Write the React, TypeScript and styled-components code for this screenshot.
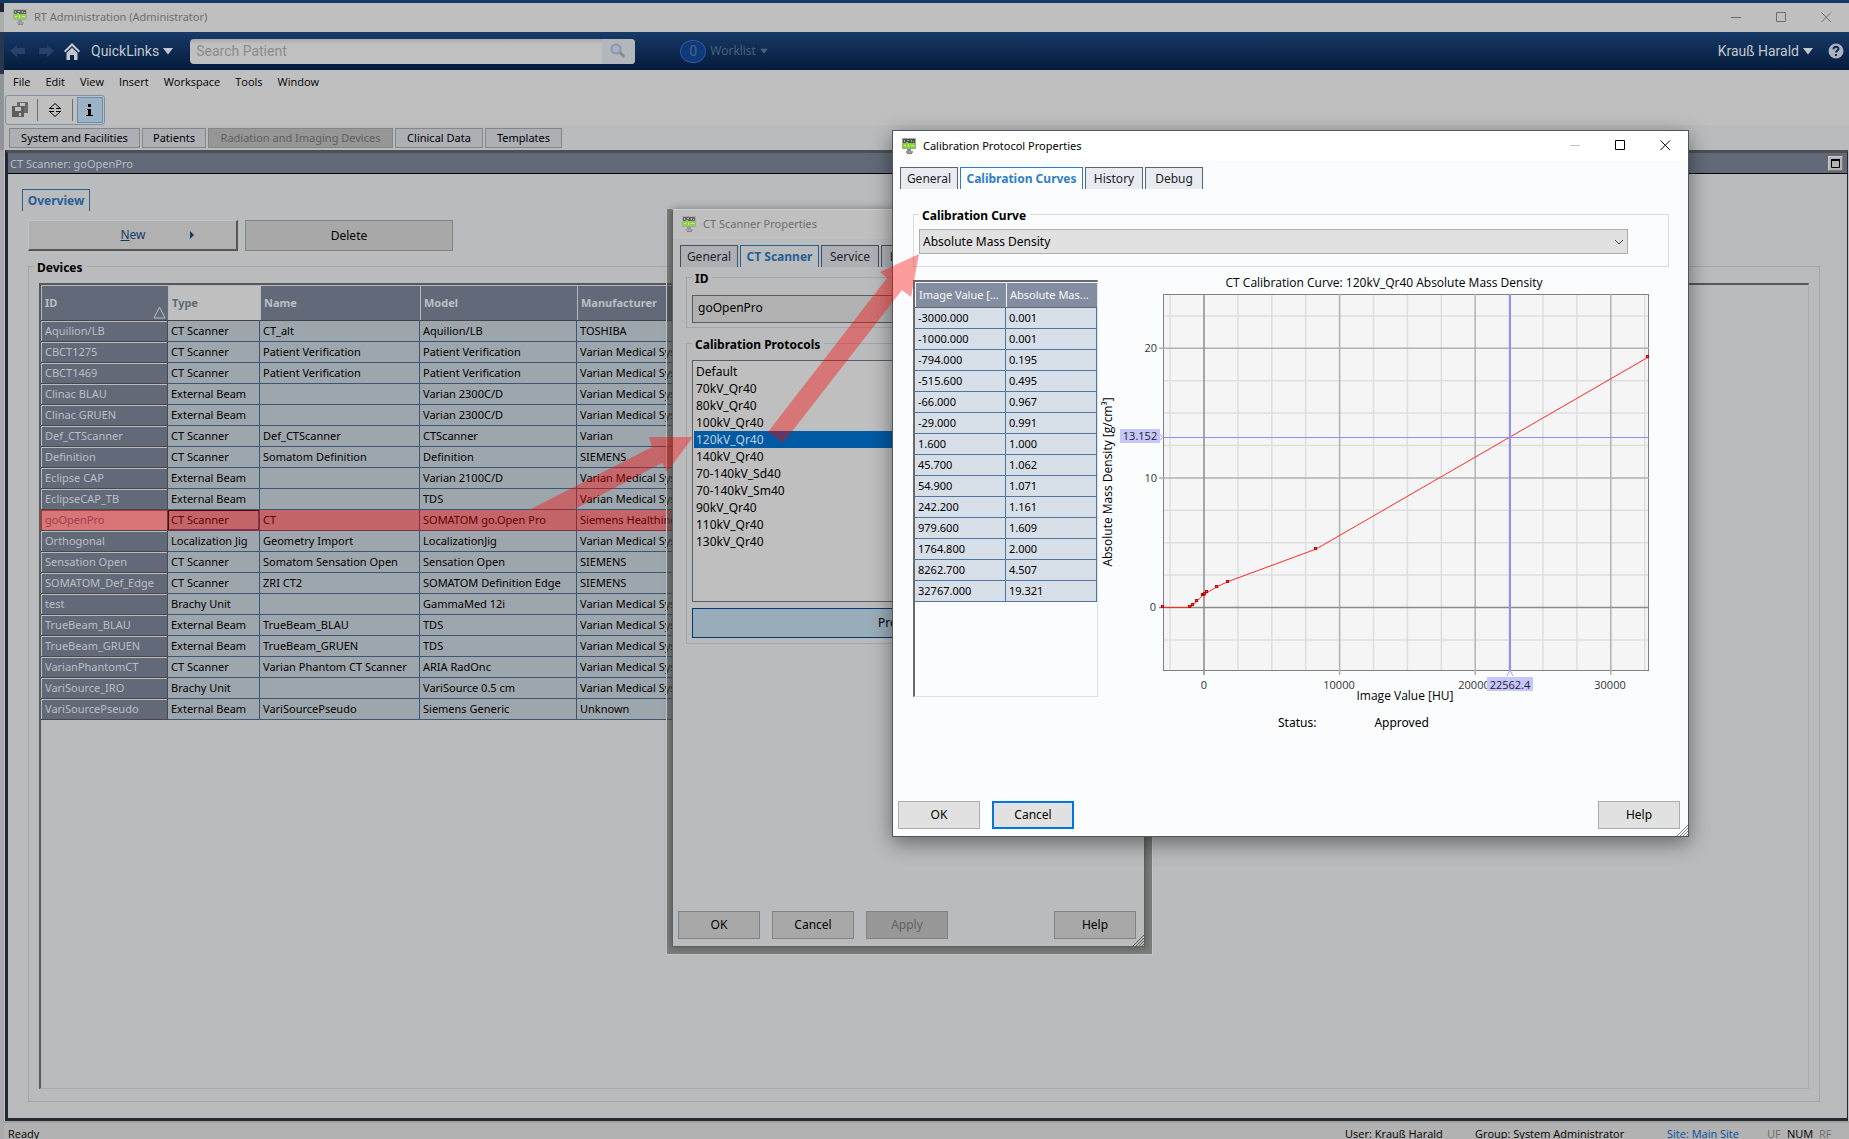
import React from "react";
import styled, { createGlobalStyle, css } from "styled-components";

const Global = createGlobalStyle`
  * { box-sizing: border-box; }
  html, body, #root { height: 100%; }
  body {
    margin: 0;
    overflow: hidden;
    background: #b4b5b7;
    color: #000;
    font: 11px/16px "Noto Sans", "Open Sans", sans-serif;
  }
  button, input, select, table { font: inherit; color: inherit; }
  button { padding: 0; white-space: nowrap; }
`;

/* ---------- desktop and main window ---------- */

const Desktop = styled.div`
  position: relative;
  height: 100%;
  padding: 3px 0 0 4px;
  overflow: hidden;
  background: linear-gradient(#163864 0 3px, #20242c 3px 12px, #a9abad 12px 32px, #27374d 32px 74px, #8f9498 74px 150px, #a9aaab 150px);
`;

const MainWindow = styled.div`
  display: flex;
  flex-direction: column;
  height: 100%;
  background: #bfbfbf;
`;

const TitleBar = styled.header<{ $dim?: boolean; $height: number }>`
  display: flex;
  flex: none;
  align-items: center;
  gap: 7px;
  height: ${(p) => p.$height}px;
  padding: 0 0 1px 9px;
  background: ${(p) => (p.$dim ? "#bfbfbf" : "#fff")};
  color: ${(p) => (p.$dim ? "#6e6e6e" : "#000")};
`;

const TitleText = styled.span`
  flex: 1;
  white-space: nowrap;
`;

const WinButtonRow = styled.div`
  display: flex;
`;

const WinButton = styled.button<{ $color: string }>`
  display: grid;
  place-items: center;
  width: 45px;
  height: 26px;
  border: 0;
  background: none;
  color: ${(p) => p.$color};
`;

const NavBar = styled.nav`
  display: flex;
  flex: none;
  align-items: center;
  height: 38px;
  padding: 0 5px 0 6px;
  background: linear-gradient(#173a68, #0c274c 60%, #041c3c);
  color: #c3c8ce;
  font-family: Roboto, "Liberation Sans", sans-serif;
  font-size: 14px;
`;

const NavButton = styled.button<{ $dim?: boolean; $gap?: number }>`
  display: flex;
  align-items: center;
  gap: 4px;
  margin-left: ${(p) => p.$gap ?? 0}px;
  border: 0;
  background: none;
  color: ${(p) => (p.$dim ? "#4b6485" : "#c3c8ce")};
`;

const SearchBox = styled.label`
  display: flex;
  width: 445px;
  height: 25px;
  margin-left: 17px;
  overflow: hidden;
  border-radius: 4px;
  background: linear-gradient(#a9a9a9, #c0c0c0 5px);
`;

const SearchInput = styled.input`
  flex: 1;
  min-width: 0;
  padding: 0 6px;
  border: 0;
  outline: 0;
  background: none;
  font-size: 14px;
  font-family: Roboto, "Liberation Sans", sans-serif;
  &::placeholder { color: #8c8c8c; }
`;

const SearchIconCell = styled.span`
  display: grid;
  place-items: center;
  width: 33px;
  background: #b3b6ba;
`;

const Badge = styled.span`
  display: grid;
  place-items: center;
  width: 26px;
  height: 23px;
  border: 1px solid #2e5a98;
  border-radius: 50%;
  background: #0e3a7c;
`;

const WorklistText = styled.span`
  font: 12px/16px "Open Sans", sans-serif;
`;

const Spacer = styled.span`
  flex: 1;
`;

const MenuBar = styled.div`
  display: flex;
  flex: none;
  gap: 15px;
  height: 25px;
  padding: 0 9px 2px;
  align-items: center;
  font-family: "Open Sans", "Noto Sans", sans-serif;
`;

const MenuItem = styled.button`
  border: 0;
  background: none;
`;

const Toolbar = styled.div`
  display: flex;
  flex: none;
  align-items: center;
  align-self: flex-start;
  height: 30px;
  margin-left: 1px;
  padding: 0 1px;
  border: 1px solid #858fa2;
  border-radius: 3px;
`;

const ToolButton = styled.button<{ $active?: boolean }>`
  display: grid;
  place-items: center;
  width: 26px;
  height: 26px;
  border: 1px solid ${(p) => (p.$active ? "#6690b8" : "transparent")};
  background: ${(p) => (p.$active ? "#9cb2c5" : "none")};
`;

const ToolRule = styled.span`
  width: 1px;
  height: 22px;
  margin: 0 4px;
  background: #6d6d6d;
`;

const WorkspaceTabs = styled.div`
  display: flex;
  flex: none;
  gap: 2px;
  height: 25px;
  padding: 3px 0 2px 5px;
  background: #babbbd;
`;

const WorkspaceTab = styled.button<{ $width: number }>`
  width: ${(p) => p.$width}px;
  border: 1px solid #868686;
  background: #acafb4;
  &:disabled { background: #969696; color: #5f5f5f; }
`;

const Panel = styled.main`
  display: flex;
  flex: 1;
  flex-direction: column;
  min-height: 0;
  margin: 0 1px 0 1px;
  border: 3px solid #242a33;
  border-top-color: #4c5053;
  border-right-width: 1px;
  background: #babbbd;
`;

const Caption = styled.div`
  display: flex;
  flex: none;
  align-items: center;
  justify-content: space-between;
  height: 21px;
  padding: 1px 4px 0 2px;
  border-bottom: 1px solid #000;
  background: #626a79;
  color: #babdc2;
`;

const RestoreButton = styled.button`
  display: grid;
  place-items: center;
  width: 15px;
  height: 15px;
  border: 1px outset #ccc;
  background: #b3b3b3;
`;

const PanelBody = styled.div`
  display: flex;
  flex: 1;
  flex-direction: column;
  min-height: 0;
  padding: 15px 27px 16px 14px;
`;

const TabStrip = styled.div`
  display: flex;
  flex: none;
  gap: 2px;
  height: 22px;
`;

const Tab = styled.button<{ $width: number; $dim?: boolean; $active?: boolean }>`
  flex: none;
  width: ${(p) => p.$width}px;
  border: 1px solid ${(p) => (p.$dim ? "#474e5a" : "#5a6478")};
  border-bottom: 0;
  background: ${(p) => (p.$dim ? "#adb0b5" : "#e8ebf0")};
  color: #1f2328;
  font-size: 12px;
  ${(p) =>
    p.$active &&
    css`
      border-color: ${p.$dim ? "#265f96" : "#2f7fc6"};
      background: ${p.$dim ? "#babbbd" : "#fafcfe"};
      color: ${p.$dim ? "#265f96" : "#337fc6"};
      font-weight: 700;
    `}
`;

const ActionRow = styled.div`
  display: flex;
  flex: none;
  gap: 7px;
  padding: 9px 6px 7px;
`;

const ActionButton = styled.button<{ $raised?: boolean }>`
  display: flex;
  align-items: center;
  justify-content: center;
  gap: 44px;
  width: ${(p) => (p.$raised ? 210 : 208)}px;
  height: 31px;
  border: 1px solid #838383;
  background: #a8a8a8;
  font-size: 12px;
  ${(p) =>
    p.$raised &&
    css`
      border-color: #c4c4c4 #555 #555 #c4c4c4;
      border-width: 1px 2px 2px 1px;
      background: #b1b1b1;
      color: #143a66;
      padding-left: 50px;
    `}
`;

const Group = styled.fieldset<{ $dim?: boolean; $pad: string; $margin?: string; $grow?: boolean; $height?: number }>`
  min-width: 0;
  min-height: 0;
  ${(p) => p.$grow && "flex: 1;"}
  ${(p) => p.$height && `height: ${p.$height}px; flex: none;`}
  margin: ${(p) => p.$margin ?? "0"};
  padding: ${(p) => p.$pad};
  border: 1px solid ${(p) => (p.$dim ? "#a4a5a7" : "#dcdcdc")};
`;

const GroupTitle = styled.legend<{ $indent?: number }>`
  margin-left: ${(p) => p.$indent ?? 0}px;
  padding: 3px 4px 0 3px;
  font-size: 12px;
  font-weight: 700;
  line-height: 13px;
`;

const DeviceFrame = styled.div`
  height: 100%;
  border: 2px solid #585858;
  border-right: 1px solid #aaabad;
  border-bottom: 1px solid #aaabad;
`;

/* ---------- tables ---------- */

const DeviceTable = styled.table`
  width: 740px;
  table-layout: fixed;
  border-spacing: 0;
`;

const DeviceHead = styled.th<{ $light?: boolean }>`
  position: relative;
  height: 36px;
  padding: 0 4px;
  border: 1px solid #444;
  border-width: 0 0 1px 0;
  box-shadow: inset 1px 1px 0 #b4b8bf;
  background: ${(p) => (p.$light ? "#bfbfbf" : "#626a79")};
  color: ${(p) => (p.$light ? "#626a79" : "#bcbfc4")};
  text-align: left;
`;

const SortMark = styled.svg`
  position: absolute;
  right: 2px;
  bottom: 1px;
`;

const DeviceRow = styled.tr<{ $marked?: boolean }>`
  th, td {
    height: 21px;
    padding: 0 3px;
    overflow: hidden;
    white-space: nowrap;
    text-align: left;
    font-weight: 400;
    line-height: 16px;
    border-bottom: 1px solid ${(p) => (p.$marked ? "#81304a" : "#3d5671")};
    border-right: 1px solid ${(p) => (p.$marked ? "#81304a" : "#3d5671")};
    background: ${(p) => (p.$marked ? "#c4656a" : "#9ea6ad")};
    color: ${(p) => (p.$marked ? "#600004" : "#000")};
  }
  th {
    border-color: #484848;
    padding-left: 4px;
    background: ${(p) => (p.$marked ? "#d87577" : "#626a79")};
    color: ${(p) => (p.$marked ? "#a04050" : "#bcbfc4")};
    box-shadow: inset 1px 1px 0 ${(p) => (p.$marked ? "#a83a3c" : "#b9bbbf")};
  }
  ${(p) => p.$marked && "td:nth-child(2) { box-shadow: inset 1px 1px 0 #600004, inset -1px -1px 0 #81304a; }"}
`;

const ValueTable = styled.table`
  width: 100%;
  table-layout: fixed;
  border-spacing: 0;
  th {
    height: 26px;
    padding: 0 4px;
    border-bottom: 1px solid #696969;
    box-shadow: inset 1px 1px 0 #f4f5f7;
    background: #838da1;
    color: #fafbfc;
    font-weight: 400;
    text-align: left;
    white-space: nowrap;
  }
  td {
    height: 21px;
    padding: 0 3px;
    border-bottom: 1px solid #5274a0;
    border-right: 1px solid #5274a0;
    background: #d6dee8;
    line-height: 16px;
  }
`;

const ValueFrame = styled.div`
  flex: none;
  width: 185px;
  height: 417px;
  margin-top: 8px;
  border: 2px solid #696969;
  border-right: 1px solid #e0e0e0;
  border-bottom: 1px solid #e0e0e0;
`;

/* ---------- status bar ---------- */

const StatusBar = styled.footer`
  display: flex;
  flex: none;
  height: 18px;
  padding-left: 4px;
  border-top: 2px solid #a3a3a3;
  background: #b2b2b2;
  font-family: "Open Sans", "Noto Sans", sans-serif;
  line-height: 22px;
  white-space: nowrap;
  overflow: hidden;
`;

const StatusCell = styled.span<{ $width?: number; $accent?: boolean; $dim?: boolean }>`
  flex: ${(p) => (p.$width ? `0 0 ${p.$width}px` : "1")};
  ${(p) => p.$accent && "color: #0050a0;"}
  ${(p) => p.$dim && "color: #6c6c6c;"}
`;

/* ---------- dialogs ---------- */

const ScannerHalo = styled.div`
  position: absolute;
  left: 666px;
  top: 209px;
  width: 487px;
  padding: 0 7px 7px 5px;
  border: 1px solid #c6c7c8;
  border-top: 0;
  background: rgba(70, 76, 70, 0.55);
`;

const ScannerDialog = styled.section`
  display: flex;
  flex-direction: column;
  height: 738px;
  border: 1px solid #5f6061;
  border-top-color: #cdcdcd;
  background: #babbbd;
  box-shadow: 0 0 8px rgba(0, 0, 0, 0.35);
`;

const CurveDialog = styled.section`
  position: absolute;
  left: 892px;
  top: 130px;
  display: flex;
  flex-direction: column;
  width: 797px;
  height: 707px;
  border: 1px solid #535557;
  background: #fafcfe;
  box-shadow: 0 6px 20px rgba(0, 0, 0, 0.45);
`;

const DialogTabs = styled.div`
  flex: none;
  padding: 6px 7px 0;
`;

const IdInput = styled.input`
  display: block;
  width: 100%;
  height: 28px;
  padding: 0 5px 3px;
  border: 1px solid #5c5c5c;
  background: #b1b1b1;
  font-size: 12px;
`;

const ProtocolList = styled.ul`
  height: 242px;
  margin: 0 0 6px;
  padding: 2px 1px;
  border: 1px solid #5b5e62;
  background: #bfbfbf;
  list-style: none;
`;

const ProtocolItem = styled.li<{ $selected?: boolean }>`
  height: 17px;
  padding-left: 2px;
  font-size: 12px;
  line-height: 17px;
  ${(p) => p.$selected && "background: #005aa3; color: #bfcfdf;"}
`;

const PropertiesButton = styled.button`
  display: block;
  width: 100%;
  height: 30px;
  border: 1px solid #003a6e;
  background: #99acb9;
  font-size: 12px;
`;

const Footer = styled.div`
  display: flex;
  gap: 12px;
  margin-top: auto;
  padding: 0 8px 7px 5px;
`;

const DialogButton = styled.button<{ $dim?: boolean; $focus?: boolean }>`
  width: 82px;
  height: 28px;
  border: ${(p) => (p.$focus ? "2px solid #0078d7" : `1px solid ${p.$dim ? "#828282" : "#adadad"}`)};
  background: ${(p) => (p.$dim ? "#a8a8a8" : "#e1e1e1")};
  font-size: 12px;
  &:disabled { background: #989898; color: #626262; }
`;

const Grip = styled.svg`
  position: absolute;
  right: 0;
  bottom: 0;
`;

const GripHost = styled.div`
  position: relative;
`;

const SelectWrap = styled.label`
  position: relative;
  display: block;
  margin-right: 35px;
  svg { position: absolute; right: 4px; top: 9px; }
`;

const CurveSelect = styled.select`
  appearance: none;
  display: block;
  width: 100%;
  height: 25px;
  padding: 1px 3px 0;
  border: 1px solid #adadad;
  border-radius: 0;
  background: #e1e1e1;
  font-size: 12px;
`;

const CurveRow = styled.div`
  display: flex;
  margin: 5px 0 0 20px;
`;

const StatusLine = styled.div`
  display: flex;
  gap: 58px;
  padding: 12px 0 0 385px;
  font-size: 12px;
`;

const ArrowLayer = styled.svg`
  position: absolute;
  left: 0;
  top: 0;
  pointer-events: none;
`;

/* ---------- drawings ---------- */

const AppIcon = ({ dim }: { dim?: boolean }) => (
  <svg width="14" height="16" viewBox="0 0 14 16" opacity={dim ? 0.8 : 1}>
    <path d="M0 0h14v11H0z" fill="#a3a5a5" />
    <path d="M1 1h12v9H1z" fill="#4a504e" />
    <path d="M1 5h12v5H1z" fill="#86d62a" />
    <path d="M2 2h1v2H2zM5 2h2v1H5zM9 2h1v2H9zM11 3h1v1h-1zM4 4h2v1H4z" fill="#a5acaa" />
    <path d="M2 7h2v1H2zM6 6h1v3H6zM9 7h3v1H9z" fill="#d0f59a" />
    <path d="M5 11h4v2H5z" fill="#8c8c8c" />
    <path d="M4 13h7v2H4z" fill="#9b9b9b" />
    <path d="M5 15h5v1H5z" fill="#7a7a7a" />
  </svg>
);

const MinGlyph = () => (
  <svg width="11" height="11"><path d="M0 5.5h10" stroke="currentColor" /></svg>
);
const MaxGlyph = () => (
  <svg width="11" height="11"><path d="M.5.5h9v9h-9z" fill="none" stroke="currentColor" /></svg>
);
const CloseGlyph = () => (
  <svg width="11" height="11"><path d="M.5.5l9.500 9.500M10 .5L.5 10" fill="none" stroke="currentColor" /></svg>
);
const Caret = ({ size = 10 }: { size?: number }) => (
  <svg width={size} height={size - 2} viewBox="0 0 10 8"><path d="M0 1h10L5 7.500z" fill="currentColor" /></svg>
);
const GripLines = ({ color }: { color: string }) => (
  <Grip width="12" height="12"><path d="M1 12L12 1M4 12l8-8M7 12l5-5M10 12l2-2" stroke={color} /></Grip>
);

const WindowButtons = ({ dim }: { dim?: boolean }) => (
  <WinButtonRow>
    <WinButton aria-label="Minimize" $color={dim ? "#6e6e6e" : "#c4c4c4"}><MinGlyph /></WinButton>
    <WinButton aria-label="Maximize" $color={dim ? "#6e6e6e" : "#000"}><MaxGlyph /></WinButton>
    <WinButton aria-label="Close" $color={dim ? "#6e6e6e" : "#000"}><CloseGlyph /></WinButton>
  </WinButtonRow>
);

/* ---------- data ---------- */

const menus = ["File", "Edit", "View", "Insert", "Workspace", "Tools", "Window"];

const workspaces: [string, number][] = [
  ["System and Facilities", 131],
  ["Patients", 64],
  ["Radiation and Imaging Devices", 185],
  ["Clinical Data", 88],
  ["Templates", 77],
];

const devices = [
  ["Aquilion/LB", "CT Scanner", "CT_alt", "Aquilion/LB", "TOSHIBA"],
  ["CBCT1275", "CT Scanner", "Patient Verification", "Patient Verification", "Varian Medical Systems"],
  ["CBCT1469", "CT Scanner", "Patient Verification", "Patient Verification", "Varian Medical Systems"],
  ["Clinac BLAU", "External Beam", "", "Varian 2300C/D", "Varian Medical Systems"],
  ["Clinac GRUEN", "External Beam", "", "Varian 2300C/D", "Varian Medical Systems"],
  ["Def_CTScanner", "CT Scanner", "Def_CTScanner", "CTScanner", "Varian"],
  ["Definition", "CT Scanner", "Somatom Definition", "Definition", "SIEMENS"],
  ["Eclipse CAP", "External Beam", "", "Varian 2100C/D", "Varian Medical Systems"],
  ["EclipseCAP_TB", "External Beam", "", "TDS", "Varian Medical Systems"],
  ["goOpenPro", "CT Scanner", "CT", "SOMATOM go.Open Pro", "Siemens Healthineers"],
  ["Orthogonal", "Localization Jig", "Geometry Import", "LocalizationJig", "Varian Medical Systems"],
  ["Sensation Open", "CT Scanner", "Somatom Sensation Open", "Sensation Open", "SIEMENS"],
  ["SOMATOM_Def_Edge", "CT Scanner", "ZRI CT2", "SOMATOM Definition Edge", "SIEMENS"],
  ["test", "Brachy Unit", "", "GammaMed 12i", "Varian Medical Systems"],
  ["TrueBeam_BLAU", "External Beam", "TrueBeam_BLAU", "TDS", "Varian Medical Systems"],
  ["TrueBeam_GRUEN", "External Beam", "TrueBeam_GRUEN", "TDS", "Varian Medical Systems"],
  ["VarianPhantomCT", "CT Scanner", "Varian Phantom CT Scanner", "ARIA RadOnc", "Varian Medical Systems"],
  ["VariSource_IRO", "Brachy Unit", "", "VariSource 0.5 cm", "Varian Medical Systems"],
  ["VariSourcePseudo", "External Beam", "VariSourcePseudo", "Siemens Generic", "Unknown"],
];

const protocols = [
  "Default", "70kV_Qr40", "80kV_Qr40", "100kV_Qr40", "120kV_Qr40", "140kV_Qr40",
  "70-140kV_Sd40", "70-140kV_Sm40", "90kV_Qr40", "110kV_Qr40", "130kV_Qr40",
];

const curve: [number, number][] = [
  [-3000, 0.001], [-1000, 0.001], [-794, 0.195], [-515.6, 0.495], [-66, 0.967],
  [-29, 0.991], [1.6, 1], [45.7, 1.062], [54.9, 1.071], [242.2, 1.161],
  [979.6, 1.609], [1764.8, 2], [8262.7, 4.507], [32767, 19.321],
];

/* ---------- calibration chart ---------- */

const ChartSvg = styled.svg`
  flex: none;
  font: 11px "Open Sans", "Noto Sans", sans-serif;
`;

const AxisTitle = styled.text`
  font-size: 12px;
  text-anchor: middle;
`;

const sx = (v: number) => 106 + v * 0.01356;
const sy = (v: number) => 335.5 - v * 12.96;

const CurveChart = () => {
  const minorX = [-2500, 2500, 5000, 7500, 12500, 15000, 17500, 22500, 25000, 27500, 32500];
  const minorY = [-2.5, 2.5, 5, 7.5, 12.5, 15, 17.5, 22.5];
  return (
    <ChartSvg width="560" height="431" role="img" aria-label="CT Calibration Curve">
      <rect x="65.5" y="22.5" width="485" height="376" fill="#f5f5f5" stroke="#808080" />
      <g stroke="#dedede" strokeWidth="1.500">
        {minorX.map((v) => <path key={v} d={`M${sx(v)} 23V398`} />)}
        {minorY.map((v) => <path key={v} d={`M66 ${sy(v)}H550`} />)}
      </g>
      <g stroke="#b2b2b2" strokeWidth="1.500">
        {[10000, 20000, 30000].map((v) => <path key={v} d={`M${sx(v)} 22V403`} />)}
        {[10, 20].map((v) => <path key={v} d={`M61 ${sy(v)}H551`} />)}
      </g>
      <path d={`M${sx(0)} 22V403M61 ${sy(0)}H551`} stroke="#8c8c8c" strokeWidth="1.500" />
      <polyline points={curve.map(([x, y]) => `${sx(x)},${sy(y)}`).join(" ")} fill="none" stroke="#ff2a2a" />
      {curve.map(([x, y]) => (
        <rect key={x} x={Math.round(sx(x)) - 1.5} y={Math.round(sy(y)) - 1.5} width="2" height="2" fill="#ff5050" stroke="#c80000" />
      ))}
      <path d="M65 165.500H551" stroke="#8f8fff" />
      <path d="M412 22V398" stroke="#8f8fff" strokeWidth="2" />
      <path d="M61 162l4 3.500l-4 3.500M409 404l3-6l3 6" fill="none" stroke="#a5a5ff" />
      <AxisTitle x="286" y="15">CT Calibration Curve: 120kV_Qr40 Absolute Mass Density</AxisTitle>
      <g textAnchor="end" fill="#333">
        <text x="59" y="80">20</text>
        <text x="59" y="210">10</text>
        <text x="58" y="339">0</text>
      </g>
      <rect x="22" y="157" width="40" height="14" fill="#c6c6ff" />
      <text x="42" y="168" textAnchor="middle" fill="#222">13.152</text>
      <g textAnchor="middle" fill="#333">
        <text x="106" y="417">0</text>
        <text x="241" y="417">10000</text>
        <text x="376" y="417">20000</text>
        <text x="512" y="417">30000</text>
        <rect x="389" y="405" width="46" height="14" fill="#c6c6ff" />
        <text x="412" y="417" fill="#222">22562.4</text>
      </g>
      <AxisTitle x="307" y="428">Image Value [HU]</AxisTitle>
      <AxisTitle transform="translate(14 210) rotate(-90)">Absolute Mass Density [g/cm³]</AxisTitle>
    </ChartSvg>
  );
};

/* ---------- page ---------- */

export default function App() {
  return (
    <Desktop>
      <Global />
      <MainWindow>
        <TitleBar $dim $height={29}>
          <AppIcon dim />
          <TitleText>RT Administration (Administrator)</TitleText>
          <WindowButtons dim />
        </TitleBar>
        <NavBar>
          <NavButton $dim aria-label="Back">
            <svg width="15" height="12"><path d="M0 6l7-6v3h8v6H7v3z" fill="#24426b" /></svg>
          </NavButton>
          <NavButton $dim $gap={14} aria-label="Forward">
            <svg width="15" height="12"><path d="M15 6L8 0v3H0v6h8v3z" fill="#24426b" /></svg>
          </NavButton>
          <NavButton $gap={10} aria-label="Home">
            <svg width="16" height="17"><path d="M8 0l8 8-1.300 1.500L8 3 1.300 9.500 0 8z" fill="#c3c8ce" /><path d="M2.500 10L8 4.700l5.500 5.300V17H10v-5H6v5H2.500z" fill="#c3c8ce" /></svg>
          </NavButton>
          <NavButton $gap={11}>QuickLinks <Caret /></NavButton>
          <SearchBox>
            <SearchInput type="text" placeholder="Search Patient" aria-label="Search Patient" />
            <SearchIconCell>
              <svg width="17" height="16"><path d="M9.500 9l5 5" stroke="#888b90" strokeWidth="3" /><circle cx="6" cy="6" r="4.500" fill="#a4b4c6" stroke="#8b97a6" strokeWidth="2" /></svg>
            </SearchIconCell>
          </SearchBox>
          <NavButton $dim $gap={45}>
            <Badge>0</Badge>
            <WorklistText>Worklist</WorklistText>
            <Caret size={8} />
          </NavButton>
          <Spacer />
          <NavButton>Krauß Harald <Caret /></NavButton>
          <NavButton $gap={15} aria-label="Help">
            <svg width="16" height="16"><circle cx="8" cy="8" r="7.500" fill="#a9b4c0" /><path d="M5.500 6.300c0-3.200 5-3.200 5-.3 0 1.800-2.500 1.600-2.500 3.600M8 11v2" fill="none" stroke="#10294c" strokeWidth="2" /></svg>
          </NavButton>
        </NavBar>
        <MenuBar>{menus.map((m) => <MenuItem key={m}>{m}</MenuItem>)}</MenuBar>
        <Toolbar>
          <ToolButton aria-label="Save">
            <svg width="16" height="16">
              <path d="M5 0h11v11H5z" fill="#6a6a6a" />
              <path d="M8 1h5v3H8z" fill="#bfbfbf" />
              <path d="M0 4h12v11H0z" fill="#5c5c5c" />
              <path d="M3 5h6v4H3zM7 11h2v3H7z" fill="#bfbfbf" />
            </svg>
          </ToolButton>
          <ToolRule />
          <ToolButton aria-label="Refresh">
            <svg width="14" height="14" fill="none" stroke="#000"><path d="M1 6l6-5.500L13 6M1 8l6 5.500L13 8M2 5.500h4M2 8.500h4M8 5.500h4M8 8.500h4" /></svg>
          </ToolButton>
          <ToolRule />
          <ToolButton $active aria-label="Information">
            <svg width="8" height="14"><path d="M2 1h3v3H2zM1 6h4v6h2v1H0v-1h2V7H1z" /></svg>
          </ToolButton>
        </Toolbar>
        <WorkspaceTabs>
          {workspaces.map(([name, width], i) => (
            <WorkspaceTab key={name} $width={width} disabled={i === 2}>{name}</WorkspaceTab>
          ))}
        </WorkspaceTabs>
        <Panel>
          <Caption>
            CT Scanner: goOpenPro
            <RestoreButton aria-label="Restore">
              <svg width="9" height="9"><path d="M.5 1h8v7.500h-8z" fill="none" stroke="#000" /><path d="M0 0h9v2H0z" /></svg>
            </RestoreButton>
          </Caption>
          <PanelBody>
            <TabStrip>
              <Tab $width={68} $dim $active>Overview</Tab>
            </TabStrip>
            <ActionRow>
              <ActionButton $raised>
                <span><u>N</u>ew</span>
                <svg width="5" height="8"><path d="M0 0l4 4-4 4z" fill="currentColor" /></svg>
              </ActionButton>
              <ActionButton>Delete</ActionButton>
            </ActionRow>
            <Group $dim $grow $pad="9px 10px 12px 10px" $margin="0 0 0 6px">
              <GroupTitle $indent={-5}>Devices</GroupTitle>
              <DeviceFrame>
                <DeviceTable>
                  <colgroup>
                    <col width="127" /><col width="92" /><col width="160" /><col width="157" /><col />
                  </colgroup>
                  <thead>
                    <tr>
                      <DeviceHead>
                        ID
                        <SortMark width="13" height="13"><path d="M6.500 1L1 12h11z" fill="none" stroke="#b9bcc1" /></SortMark>
                      </DeviceHead>
                      <DeviceHead $light>Type</DeviceHead>
                      <DeviceHead>Name</DeviceHead>
                      <DeviceHead>Model</DeviceHead>
                      <DeviceHead>Manufacturer</DeviceHead>
                    </tr>
                  </thead>
                  <tbody>
                    {devices.map(([id, ...rest]) => (
                      <DeviceRow key={id} $marked={id === "goOpenPro"}>
                        <th scope="row">{id}</th>
                        {rest.map((value, i) => <td key={i}>{value}</td>)}
                      </DeviceRow>
                    ))}
                  </tbody>
                </DeviceTable>
              </DeviceFrame>
            </Group>
          </PanelBody>
        </Panel>
        <StatusBar>
          <StatusCell>Ready</StatusCell>
          <StatusCell $width={130}>User: Krauß Harald</StatusCell>
          <StatusCell $width={192}>Group: System Administrator</StatusCell>
          <StatusCell $width={100} $accent>Site: Main Site</StatusCell>
          <StatusCell $width={20} $dim>UF</StatusCell>
          <StatusCell $width={32}>NUM</StatusCell>
          <StatusCell $width={30} $dim>RF</StatusCell>
        </StatusBar>
      </MainWindow>

      <ScannerHalo>
        <ScannerDialog aria-label="CT Scanner Properties">
          <TitleBar $dim $height={29}>
            <AppIcon dim />
            <TitleText>CT Scanner Properties</TitleText>
          </TitleBar>
          <DialogTabs>
            <TabStrip>
              <Tab $dim $width={58}>General</Tab>
              <Tab $dim $active $width={79}>CT Scanner</Tab>
              <Tab $dim $width={58}>Service</Tab>
              <Tab $dim $width={58}>History</Tab>
            </TabStrip>
          </DialogTabs>
          <Group $dim $height={59} $pad="10px 5px 0" $margin="2px 6px 7px 13px">
            <GroupTitle>ID</GroupTitle>
            <IdInput type="text" defaultValue="goOpenPro" aria-label="ID" />
          </Group>
          <Group $dim $height={309} $pad="9px 5px 0" $margin="0 6px 0 13px">
            <GroupTitle>Calibration Protocols</GroupTitle>
            <ProtocolList role="listbox" aria-label="Calibration Protocols">
              {protocols.map((p) => (
                <ProtocolItem key={p} role="option" aria-selected={p === "120kV_Qr40"} $selected={p === "120kV_Qr40"}>{p}</ProtocolItem>
              ))}
            </ProtocolList>
            <PropertiesButton>Properties...</PropertiesButton>
          </Group>
          <Footer>
            <DialogButton $dim>OK</DialogButton>
            <DialogButton $dim>Cancel</DialogButton>
            <DialogButton $dim disabled>Apply</DialogButton>
            <Spacer />
            <DialogButton $dim>Help</DialogButton>
          </Footer>
          <GripHost><GripLines color="#5c5c5c" /></GripHost>
        </ScannerDialog>
      </ScannerHalo>

      <CurveDialog aria-label="Calibration Protocol Properties">
        <TitleBar $height={30}>
          <AppIcon />
          <TitleText>Calibration Protocol Properties</TitleText>
          <WindowButtons />
        </TitleBar>
        <DialogTabs>
          <TabStrip>
            <Tab $width={58}>General</Tab>
            <Tab $active $width={123}>Calibration Curves</Tab>
            <Tab $width={58}>History</Tab>
            <Tab $width={58}>Debug</Tab>
          </TabStrip>
        </DialogTabs>
        <Group $height={61} $pad="7px 5px 0" $margin="17px 19px 0 20px">
          <GroupTitle>Calibration Curve</GroupTitle>
          <SelectWrap>
            <CurveSelect aria-label="Calibration Curve">
              <option>Absolute Mass Density</option>
            </CurveSelect>
            <svg width="10" height="8"><path d="M1 2l4 4 4-4" fill="none" stroke="#444" /></svg>
          </SelectWrap>
        </Group>
        <CurveRow>
          <ValueFrame>
            <ValueTable>
              <thead>
                <tr><th>Image Value [...</th><th>Absolute Mas...</th></tr>
              </thead>
              <tbody>
                {curve.map(([x, y]) => (
                  <tr key={x}><td>{x.toFixed(3)}</td><td>{y.toFixed(3)}</td></tr>
                ))}
              </tbody>
            </ValueTable>
          </ValueFrame>
          <CurveChart />
        </CurveRow>
        <StatusLine><span>Status:</span><span>Approved</span></StatusLine>
        <Footer>
          <DialogButton>OK</DialogButton>
          <DialogButton $focus>Cancel</DialogButton>
          <Spacer />
          <DialogButton>Help</DialogButton>
        </Footer>
        <GripHost><GripLines color="#808080" /></GripHost>
      </CurveDialog>

      <ArrowLayer width="930" height="520" fill="rgba(255, 0, 0, 0.38)">
        <path d="M529 510L652 447L649 437H693L667 472L662 463L573 510z" />
        <path d="M768 432L887 278L880 272L919 254L911 297L902 290L783 443z" />
      </ArrowLayer>
    </Desktop>
  );
}
